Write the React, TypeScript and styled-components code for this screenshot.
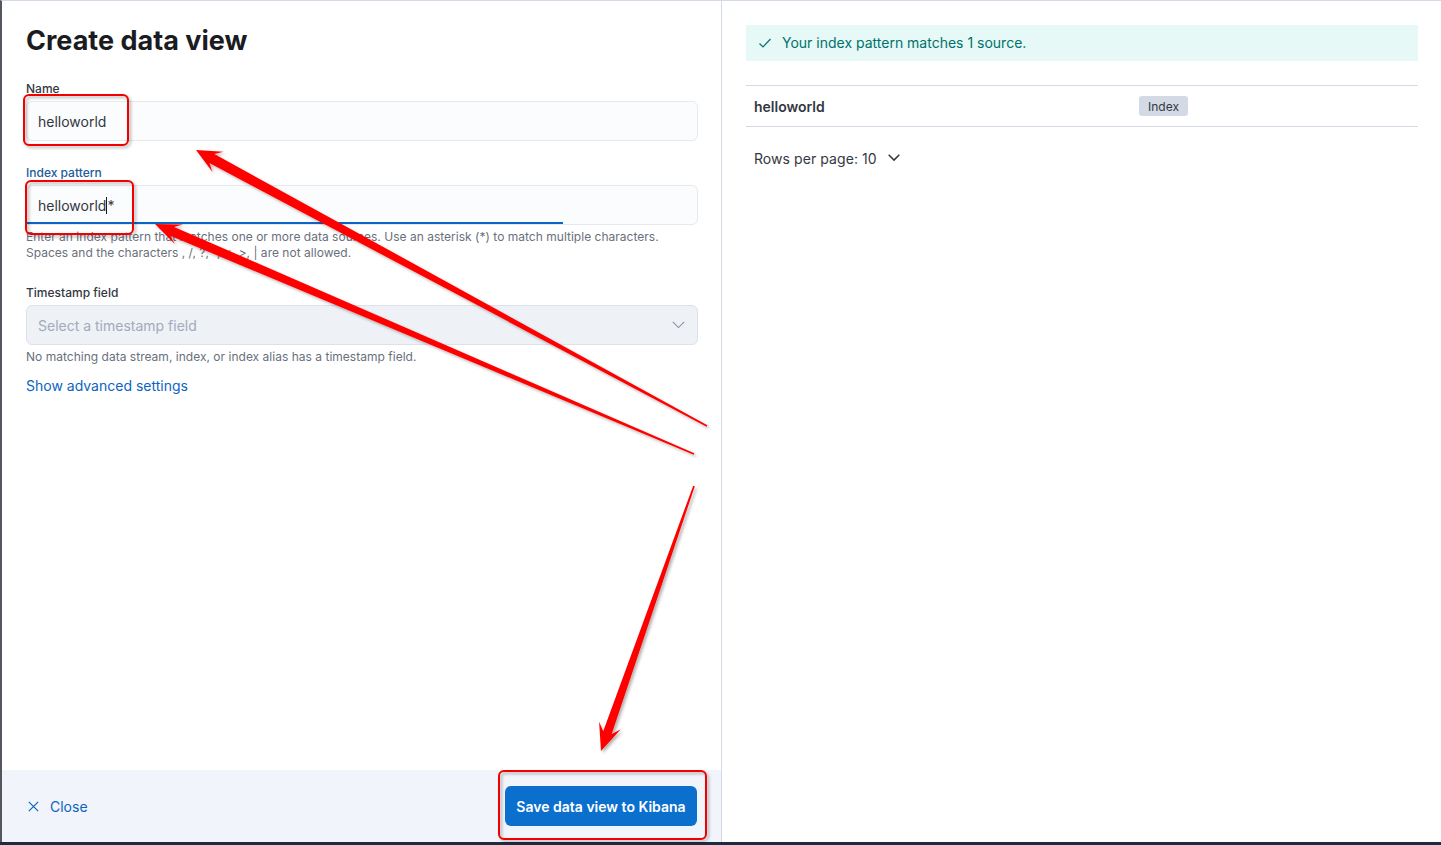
import React from "react";
import styled, { createGlobalStyle } from "styled-components";

const GlobalStyle = createGlobalStyle`
  * { box-sizing: border-box; }
  html, body { margin: 0; padding: 0; }
  body {
    background: #1c2b3f;
    font-family: Inter, "Noto Sans", "Liberation Sans", sans-serif;
    color: #343741;
    -webkit-font-smoothing: antialiased;
  }
`;

const Page = styled.div`
  position: relative;
  width: 1441px;
  height: 845px;
  display: flex;
  flex-direction: column;
  overflow: hidden;
`;

const Flyout = styled.div`
  height: 842px;
  display: flex;
  background: #ffffff;
  border-top: 1px solid #d3dae6;
  border-left: 2px solid #54575e;
`;

const BottomStrip = styled.div`
  height: 3px;
  background: #1c2b3f;
`;

const LeftPanel = styled.section`
  width: 720px;
  display: flex;
  flex-direction: column;
  border-right: 1px solid #d3dae6;
`;

const LeftBody = styled.div`
  flex: 1;
  padding: 20px 23px 0 24px;
  display: flex;
  flex-direction: column;
`;

const Title = styled.h1`
  margin: 0 0 20px;
  font-size: 27px;
  line-height: 40px;
  font-weight: 700;
  letter-spacing: 0;
  color: #1a1c21;
`;

const FormRow = styled.div<{ $gap?: number }>`
  display: flex;
  flex-direction: column;
  margin-top: ${(p) => p.$gap ?? 0}px;
`;

const Label = styled.label<{ $focused?: boolean }>`
  font-size: 12px;
  line-height: 16px;
  font-weight: 500;
  color: ${(p) => (p.$focused ? "#1a5c9c" : "#343741")};
  margin-bottom: 4px;
`;

const Field = styled.div<{ $focused?: boolean }>`
  height: 40px;
  display: flex;
  align-items: center;
  padding: 0 11px;
  font-size: 14px;
  color: #343741;
  background-color: #fbfcfd;
  border: 1px solid #e6e9ef;
  border-radius: 6px;
  ${(p) =>
    p.$focused
      ? `background-image: linear-gradient(#0b64c6, #0b64c6);
         background-repeat: no-repeat;
         background-position: left bottom;
         background-size: 80% 2px;
         border-bottom-left-radius: 0;`
      : ""}
`;

const Caret = styled.span`
  display: inline-block;
  width: 1px;
  height: 17px;
  background: #1a1c21;
  margin: 0;
  vertical-align: middle;
`;

const SelectBox = styled.div`
  height: 40px;
  display: flex;
  align-items: center;
  justify-content: space-between;
  padding: 0 12px 0 11px;
  font-size: 14px;
  color: #a2abba;
  background: #eef1f6;
  border: 1px solid #dde2ea;
  border-radius: 6px;
`;

const Help = styled.div`
  margin-top: 4px;
  font-size: 12px;
  line-height: 16px;
  letter-spacing: 0.0015em;
  color: #69707d;
`;

const Link = styled.a`
  margin-top: 11px;
  font-size: 14px;
  line-height: 20px;
  color: #0b64c0;
  text-decoration: none;
  align-self: flex-start;
`;

const Footer = styled.footer`
  height: 72px;
  background: #f1f4fa;
  padding: 16px 24px 16px 24px;
  display: flex;
  align-items: center;
  justify-content: space-between;
`;

const CloseButton = styled.button`
  display: flex;
  align-items: center;
  gap: 11px;
  background: none;
  border: none;
  padding: 0 0 0 2px;
  font-family: inherit;
  font-size: 14px;
  color: #0b64c0;
  cursor: pointer;
`;

const PrimaryButton = styled.button`
  height: 40px;
  width: 192px;
  border: none;
  border-radius: 6px;
  background: #0b6fce;
  color: #ffffff;
  font-family: inherit;
  font-size: 14px;
  font-weight: 600;
  cursor: pointer;
`;

const RightPanel = styled.section`
  flex: 1;
  padding: 24px 23px 0 24px;
  display: flex;
  flex-direction: column;
`;

const Callout = styled.div`
  height: 36px;
  display: flex;
  align-items: center;
  gap: 10px;
  padding: 0 12px 1px;
  background: #e6f9f7;
  color: #00726b;
  font-size: 14px;
`;

const Table = styled.div`
  margin-top: 24px;
  border-top: 1px solid #d3dae6;
`;

const TableRow = styled.div`
  display: grid;
  grid-template-columns: 385px 1fr;
  height: 41px;
  border-bottom: 1px solid #d3dae6;
  align-items: center;
`;

const Cell = styled.div<{ $bold?: boolean }>`
  padding: 0 8px;
  font-size: 14px;
  font-weight: ${(p) => (p.$bold ? 600 : 400)};
  color: #343741;
`;

const Badge = styled.span`
  display: inline-flex;
  align-items: center;
  height: 20px;
  padding: 0 9px;
  border-radius: 3px;
  background: #d3dae6;
  font-size: 12px;
  color: #343741;
`;

const RowsPerPage = styled.button`
  margin-top: 19px;
  align-self: flex-start;
  display: flex;
  align-items: center;
  gap: 11px;
  height: 24px;
  padding: 0 8px;
  border: none;
  background: none;
  font-family: inherit;
  font-size: 14px;
  letter-spacing: 0.005em;
  color: #343741;
`;

const Overlay = styled.svg`
  position: absolute;
  left: 0;
  top: 0;
  pointer-events: none;
`;

type Pt = [number, number];

function arrowPoints(tail: Pt, tip: Pt, L: number, hw: number, ws: number, tw = 0.8): string {
  const dx = tip[0] - tail[0];
  const dy = tip[1] - tail[1];
  const len = Math.hypot(dx, dy);
  const ux = dx / len;
  const uy = dy / len;
  const px = -uy;
  const py = ux;
  const B: Pt = [tip[0] - ux * L, tip[1] - uy * L];
  const J: Pt = [tip[0] - ux * L * 0.72, tip[1] - uy * L * 0.72];
  const pts: Pt[] = [
    [tail[0] + px * tw, tail[1] + py * tw],
    [J[0] + px * ws, J[1] + py * ws],
    [B[0] + px * hw, B[1] + py * hw],
    tip,
    [B[0] - px * hw, B[1] - py * hw],
    [J[0] - px * ws, J[1] - py * ws],
    [tail[0] - px * tw, tail[1] - py * tw],
  ];
  return pts.map((p) => `${p[0].toFixed(1)},${p[1].toFixed(1)}`).join(" ");
}

const Annotations: React.FC = () => (
  <Overlay width={1441} height={845} viewBox="0 0 1441 845">
    <defs>
      <filter id="sh" x="-10%" y="-10%" width="120%" height="120%">
        <feDropShadow dx="2" dy="2" stdDeviation="1.8" floodColor="#000" floodOpacity="0.3" />
      </filter>
    </defs>
    <g fill="none" stroke="#f20000" strokeWidth={2} filter="url(#sh)">
      <rect x={24} y={95} width={104} height={50} rx={5} />
      <rect x={26} y={181} width={107} height={53} rx={5} />
      <rect x={499} y={771} width={207} height={68} rx={5} />
    </g>
    <g fill="#ff0000" filter="url(#sh)">
      <polygon points={arrowPoints([707, 426], [196, 150], 25, 11.5, 5.2)} />
      <polygon points={arrowPoints([694, 454], [155, 224], 26, 10.5, 4.8)} />
      <polygon points={arrowPoints([694, 486], [601, 751], 27, 11.5, 4.5)} />
    </g>
  </Overlay>
);

const CheckIcon = () => (
  <svg width="14" height="14" viewBox="0 0 14 14" fill="none">
    <path d="M1.5 7.5 L5 11 L12.5 3" stroke="#00726b" strokeWidth="1.2" />
  </svg>
);

const ChevronDown: React.FC<{ color: string; w?: number; sw?: number }> = ({ color, w = 12, sw = 1.2 }) => (
  <svg width={w} height={w * 0.6} viewBox="0 0 12 7" fill="none">
    <path d="M0.7 0.7 L6 6 L11.3 0.7" stroke={color} strokeWidth={sw} />
  </svg>
);

const CrossIcon = () => (
  <svg width="11" height="11" viewBox="0 0 11 11" fill="none">
    <path d="M0.8 0.8 L10.2 10.2 M10.2 0.8 L0.8 10.2" stroke="#0b64c0" strokeWidth="1.2" />
  </svg>
);

export default function App() {
  return (
    <>
      <GlobalStyle />
      <Page>
        <Flyout>
          <LeftPanel>
            <LeftBody>
              <Title>Create data view</Title>
              <FormRow>
                <Label>Name</Label>
                <Field>helloworld</Field>
              </FormRow>
              <FormRow $gap={24}>
                <Label $focused>Index pattern</Label>
                <Field $focused>
                  helloworld
                  <Caret />*
                </Field>
                <Help>
                  Enter an index pattern that matches one or more data sources. Use an asterisk (*) to match
                  multiple characters.
                  <br />
                  Spaces and the characters , /, ?, ", &lt;, &gt;, | are not allowed.
                </Help>
              </FormRow>
              <FormRow $gap={24}>
                <Label>Timestamp field</Label>
                <SelectBox>
                  <span>Select a timestamp field</span>
                  <ChevronDown color="#8a92a0" w={13} sw={1} />
                </SelectBox>
                <Help>No matching data stream, index, or index alias has a timestamp field.</Help>
              </FormRow>
              <Link href="#">Show advanced settings</Link>
            </LeftBody>
            <Footer>
              <CloseButton>
                <CrossIcon />
                Close
              </CloseButton>
              <PrimaryButton>Save data view to Kibana</PrimaryButton>
            </Footer>
          </LeftPanel>
          <RightPanel>
            <Callout>
              <CheckIcon />
              Your index pattern matches 1 source.
            </Callout>
            <Table>
              <TableRow>
                <Cell $bold>helloworld</Cell>
                <Cell>
                  <Badge>Index</Badge>
                </Cell>
              </TableRow>
            </Table>
            <RowsPerPage>
              Rows per page: 10
              <ChevronDown color="#343741" w={12} sw={1.5} />
            </RowsPerPage>
          </RightPanel>
        </Flyout>
        <BottomStrip />
        <Annotations />
      </Page>
    </>
  );
}
